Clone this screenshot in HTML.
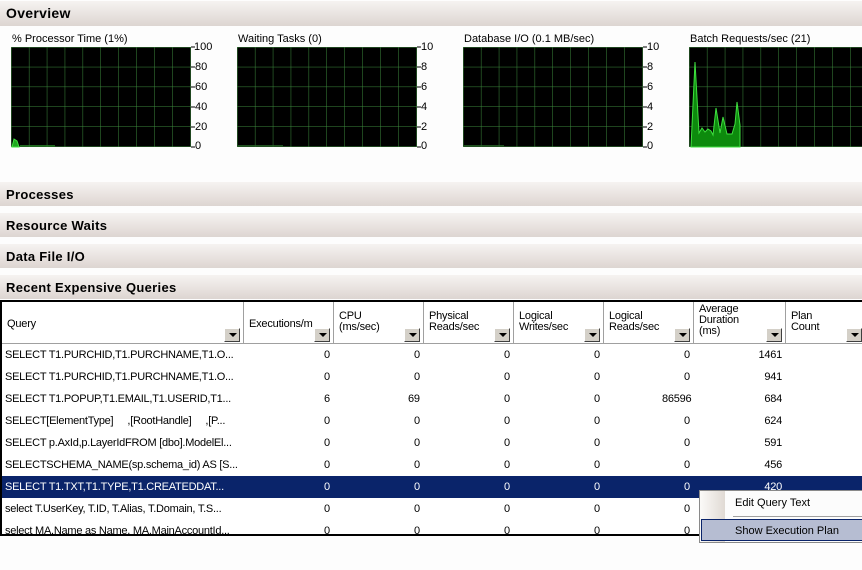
<!DOCTYPE html>
<html><head><meta charset="utf-8"><style>
*{margin:0;padding:0;box-sizing:border-box}
body{width:862px;height:570px;background:#fdfdfd;font-family:"Liberation Sans",sans-serif;position:relative;overflow:hidden;font-size:11px;color:#000}
.hd{position:absolute;left:0;width:862px;height:24px;background:linear-gradient(#f6f3f1,#ddd5d1);font-weight:bold;font-size:13px;padding-left:6px;line-height:25px;letter-spacing:0.3px}
.ct{position:absolute;font-size:11px;top:33px}
.ax{position:absolute;font-size:11px;line-height:11px}
.col{position:absolute;top:302px;height:42px;border-right:1px solid #a0a0a0;font-size:11px;line-height:11px;padding:3px 0 0 5px;color:#000;letter-spacing:-0.2px}
.btn{position:absolute;width:16px;height:14px;background:#d4d0c8;border:1px solid;border-color:#fff #404040 #404040 #fff;bottom:2px;right:3px}
.btn:after{content:"";position:absolute;left:4px;top:4px;border-left:4px solid transparent;border-right:4px solid transparent;border-top:4px solid #000}
.row{position:absolute;left:2px;width:860px;height:22px;line-height:23px;font-size:11px;letter-spacing:-0.25px}
.row span{position:absolute;top:0}
.sel{background:#0a246a;color:#fff}
</style></head><body>
<div class="hd" style="top:1px;height:25px;font-size:14px">Overview</div>

<div class="ct" style="left:12px">% Processor Time (1%)</div>
<div class="ct" style="left:238px">Waiting Tasks (0)</div>
<div class="ct" style="left:464px">Database I/O (0.1 MB/sec)</div>
<div class="ct" style="left:690px">Batch Requests/sec (21)</div>

<svg width="862" height="160" style="position:absolute;left:0;top:0">
<defs><pattern id="g" x="11" y="47" width="17.9" height="19.8" patternUnits="userSpaceOnUse"><rect width="18" height="20" fill="#000"/><path d="M0 0V20M0 0H18" stroke="#3d8a3d" stroke-width="1"/></pattern>
<pattern id="g2" x="237" y="47" width="17.9" height="19.8" patternUnits="userSpaceOnUse"><rect width="18" height="20" fill="#000"/><path d="M0 0V20M0 0H18" stroke="#3d8a3d" stroke-width="1"/></pattern>
<pattern id="g3" x="463" y="47" width="17.9" height="19.8" patternUnits="userSpaceOnUse"><rect width="18" height="20" fill="#000"/><path d="M0 0V20M0 0H18" stroke="#3d8a3d" stroke-width="1"/></pattern>
<pattern id="g4" x="689" y="47" width="17.9" height="19.8" patternUnits="userSpaceOnUse"><rect width="18" height="20" fill="#000"/><path d="M0 0V20M0 0H18" stroke="#3d8a3d" stroke-width="1"/></pattern></defs>
<rect x="11" y="47" width="180" height="100" fill="url(#g)"/>
<rect x="237" y="47" width="180" height="100" fill="url(#g2)"/>
<rect x="463" y="47" width="180" height="100" fill="url(#g3)"/>
<rect x="689" y="47" width="173" height="100" fill="url(#g4)"/>
<g stroke="#000" stroke-width="1">
<path d="M191 47h4M191 67h4M191 87h4M191 107h4M191 127h4M191 147h4"/>
<path d="M417 47h4M417 67h4M417 87h4M417 107h4M417 127h4M417 147h4"/>
<path d="M643 47h4M643 67h4M643 87h4M643 107h4M643 127h4M643 147h4"/>
</g>
<path d="M12 147L14 139L17 141L19 147Z" fill="#1fa81f" stroke="#3fe03f"/>
<path d="M20 146h35" stroke="#2a8a2a" stroke-width="1.5"/>
<path d="M238 146h45" stroke="#2a6a2a" stroke-width="1.5"/>
<path d="M464 146h40" stroke="#2a6a2a" stroke-width="1.5"/>
<path d="M691 147L695 62L699 133L702 128L705 132L708 129L711 131L713 135L716 108L720 133L723 117L727 134L732 134L735 124L737 102L740 125L740 147Z" fill="#0d8a0d" stroke="#3fe03f" stroke-width="1"/>
</svg>
<div class="ax" style="left:194px;top:42px">100</div><div class="ax" style="left:195px;top:62px">80</div><div class="ax" style="left:195px;top:82px">60</div><div class="ax" style="left:195px;top:102px">40</div><div class="ax" style="left:195px;top:122px">20</div><div class="ax" style="left:195px;top:141px">0</div>
<div class="ax" style="left:421px;top:42px">10</div><div class="ax" style="left:421px;top:62px">8</div><div class="ax" style="left:421px;top:82px">6</div><div class="ax" style="left:421px;top:102px">4</div><div class="ax" style="left:421px;top:122px">2</div><div class="ax" style="left:421px;top:141px">0</div>
<div class="ax" style="left:647px;top:42px">10</div><div class="ax" style="left:647px;top:62px">8</div><div class="ax" style="left:647px;top:82px">6</div><div class="ax" style="left:647px;top:102px">4</div><div class="ax" style="left:647px;top:122px">2</div><div class="ax" style="left:647px;top:141px">0</div>

<div class="hd" style="top:182px">Processes</div>
<div class="hd" style="top:213px">Resource Waits</div>
<div class="hd" style="top:244px">Data File I/O</div>
<div class="hd" style="top:275px">Recent Expensive Queries</div>

<div style="position:absolute;left:0;top:300px;width:862px;height:236px;border:2px solid #000;border-right:none;background:#fff"></div>
<div style="position:absolute;left:2px;top:302px;width:860px;height:42px;border-bottom:1px solid #a0a0a0;background:#fff"></div>
<div class="col" style="left:2px;width:242px;padding-top:17px">Query<div class="btn"></div></div>
<div class="col" style="left:244px;width:90px;padding-top:17px">Executions/m<div class="btn"></div></div>
<div class="col" style="left:334px;width:90px;padding-top:9px">CPU<br>(ms/sec)<div class="btn"></div></div>
<div class="col" style="left:424px;width:90px;padding-top:9px">Physical<br>Reads/sec<div class="btn"></div></div>
<div class="col" style="left:514px;width:90px;padding-top:9px">Logical<br>Writes/sec<div class="btn"></div></div>
<div class="col" style="left:604px;width:90px;padding-top:9px">Logical<br>Reads/sec<div class="btn"></div></div>
<div class="col" style="left:694px;width:92px;padding-top:2px">Average<br>Duration<br>(ms)<div class="btn"></div></div>
<div class="col" style="left:786px;width:80px;padding-top:9px">Plan<br>Count<div class="btn"></div></div>

<div style="position:absolute;left:2px;top:344px;width:860px;height:190px;overflow:hidden">
<div class="row" style="top:0;left:0">
<span style="left:3px">SELECT T1.PURCHID,T1.PURCHNAME,T1.O...</span><span style="left:322px">0</span><span style="left:412px">0</span><span style="left:502px">0</span><span style="left:592px">0</span><span style="left:682px">0</span><span style="right:80px">1461</span></div>
<div class="row" style="top:22px;left:0">
<span style="left:3px">SELECT T1.PURCHID,T1.PURCHNAME,T1.O...</span><span style="left:322px">0</span><span style="left:412px">0</span><span style="left:502px">0</span><span style="left:592px">0</span><span style="left:682px">0</span><span style="right:80px">941</span></div>
<div class="row" style="top:44px;left:0">
<span style="left:3px">SELECT T1.POPUP,T1.EMAIL,T1.USERID,T1...</span><span style="left:322px">6</span><span style="left:406px">69</span><span style="left:502px">0</span><span style="left:592px">0</span><span style="left:660px">86596</span><span style="right:80px">684</span></div>
<div class="row" style="top:66px;left:0">
<span style="left:3px">SELECT[ElementType] &nbsp;&nbsp;&nbsp;&nbsp;,[RootHandle] &nbsp;&nbsp;&nbsp;&nbsp;,[P...</span><span style="left:322px">0</span><span style="left:412px">0</span><span style="left:502px">0</span><span style="left:592px">0</span><span style="left:682px">0</span><span style="right:80px">624</span></div>
<div class="row" style="top:88px;left:0">
<span style="left:3px">SELECT p.AxId,p.LayerIdFROM [dbo].ModelEl...</span><span style="left:322px">0</span><span style="left:412px">0</span><span style="left:502px">0</span><span style="left:592px">0</span><span style="left:682px">0</span><span style="right:80px">591</span></div>
<div class="row" style="top:110px;left:0">
<span style="left:3px">SELECTSCHEMA_NAME(sp.schema_id) AS [S...</span><span style="left:322px">0</span><span style="left:412px">0</span><span style="left:502px">0</span><span style="left:592px">0</span><span style="left:682px">0</span><span style="right:80px">456</span></div>
<div class="row sel" style="top:132px;left:0">
<span style="left:3px">SELECT T1.TXT,T1.TYPE,T1.CREATEDDAT...</span><span style="left:322px">0</span><span style="left:412px">0</span><span style="left:502px">0</span><span style="left:592px">0</span><span style="left:682px">0</span><span style="right:80px">420</span></div>
<div class="row" style="top:154px;left:0">
<span style="left:3px">select T.UserKey, T.ID, T.Alias, T.Domain, T.S...</span><span style="left:322px">0</span><span style="left:412px">0</span><span style="left:502px">0</span><span style="left:592px">0</span><span style="left:682px">0</span></div>
<div class="row" style="top:176px;left:0">
<span style="left:3px">select MA.Name as Name, MA.MainAccountId...</span><span style="left:322px">0</span><span style="left:412px">0</span><span style="left:502px">0</span><span style="left:592px">0</span><span style="left:682px">0</span></div>
</div>

<div style="position:absolute;left:699px;top:490px;width:170px;height:53px;background:#fcfcfc;border:1px solid #8a8a8a;border-right:none">
<div style="position:absolute;left:0;top:0;width:25px;height:51px;background:linear-gradient(90deg,#fbfaf8,#e0dad4)"></div>
<div style="position:absolute;left:35px;top:6px;font-size:11px">Edit Query Text</div>
<div style="position:absolute;left:33px;top:25px;width:140px;height:1px;background:#a0a0a0"></div>
<div style="position:absolute;left:1px;top:28px;width:170px;height:22px;background:#b6bdd2;border:1px solid #0a246a"></div>
<div style="position:absolute;left:35px;top:34px;font-size:11px">Show Execution Plan</div>
</div>
</body></html>
